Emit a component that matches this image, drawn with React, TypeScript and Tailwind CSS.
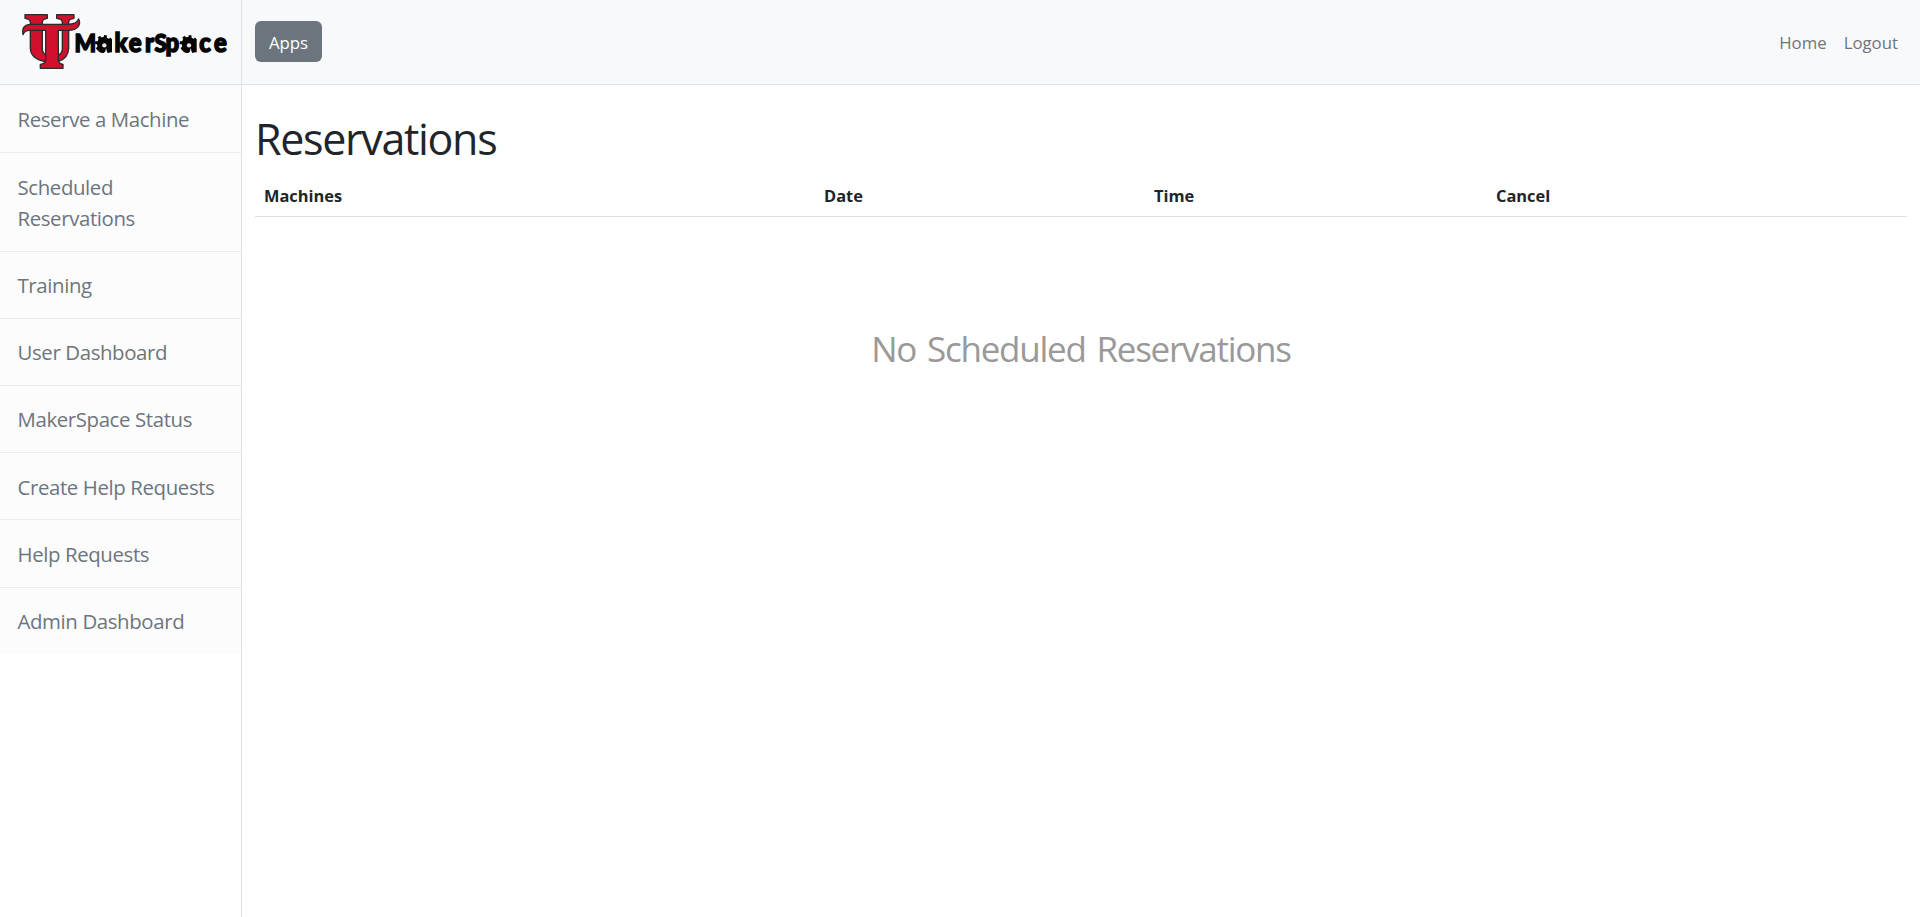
const navItems = [
  "Reserve a Machine",
  "Scheduled Reservations",
  "Training",
  "User Dashboard",
  "MakerSpace Status",
  "Create Help Requests",
  "Help Requests",
  "Admin Dashboard",
];

const teeth = [10, 55, 190, 235, 280, 325];

function Gear({ cx, cy }: { cx: number; cy: number }) {
  return (
    <g transform={`translate(${cx} ${cy})`}>
      {teeth.map((a) => (
        <rect key={a} x="-4.5" y="-27" width="9" height="12" fill="#050505" transform={`rotate(${a})`} />
      ))}
      <circle r="21" fill="#050505" />
      <circle cx="1" cy="4" r="6.5" fill="#e9eaec" />
      <path d="M6 12 L10 27 L3 27 Z" fill="#f8f9fb" />
      <rect x="12" y="-14" width="12" height="39" fill="#050505" />
    </g>
  );
}

function Logo() {
  return (
    <svg className="block h-[84px] w-[240px]" viewBox="0 0 720 252" role="img" aria-label="MakerSpace">
      <g fill="#cf112d" stroke="#2c2a2e" strokeWidth="4" strokeLinejoin="round">
        <path d="M75 44 H142 V55 C133 56 127 60 127 67 V148 Q128 160 139 166 H173 Q187 160 187 146 V67 C187 60 181 56 170 55 V44 H222 V55 C212 56 206 60 206 67 V145 Q205 176 174 185 H134 Q92 176 91 145 V67 C91 60 85 56 75 55 Z" />
        <path d="M69 104 C65 84 74 73 92 73 H203 C222 73 232 68 236 57 C245 75 231 91 207 91 H175 V181 Q176 191 189 193 V205 H121 V193 Q137 191 137 181 V91 H89 C78 91 72 95 69 104 Z" />
      </g>
      <text
        x="243 319 373 420 473 504 540 594 650 698"
        y="155"
        transform="scale(0.92 1)"
        fontFamily="Lato, 'Open Sans', sans-serif"
        fontWeight="900"
        fontSize="78"
        fill="#050505"
        stroke="#050505"
        strokeWidth="4.5"
      >
        <tspan fontSize="74">M</tspan>aker<tspan fontSize="72">S</tspan>pace
      </text>
      <Gear cx={312} cy={132} />
      <Gear cx={566} cy={132} />
    </svg>
  );
}

export default function App() {
  return (
    <div className="flex h-[917px] w-full flex-col overflow-hidden bg-white font-['Open_Sans',sans-serif] text-[#212529]">
      <header className="flex h-[85px] shrink-0 border-b border-[#dee2e6] bg-[#f8f9fb]">
        <div className="w-[242px] shrink-0 border-r border-[#dee2e6]">
          <Logo />
        </div>
        <div className="flex h-[83px] flex-1 items-center justify-between pr-[22px] pl-[13px]">
          <button className="h-[41px] w-[67px] rounded-md bg-[#6c757d] pt-px text-[16.8px] leading-[39px] text-white">
            Apps
          </button>
          <nav className="flex gap-[17px] pt-[2px] text-[16.8px] text-[#737373]">
            <a>Home</a>
            <a>Logout</a>
          </nav>
        </div>
      </header>
      <div className="flex min-h-0 flex-1">
        <aside className="w-[242px] shrink-0 border-r border-[#dee2e6]">
          <ul className="divide-y divide-[#e9ebee] bg-[#fcfcfc] pt-px">
            {navItems.map((item) => (
              <li
                key={item}
                className="pt-[18.4px] pr-4 pb-[16.6px] pl-[17.5px] text-[20.4px] leading-[31.2px] tracking-[-0.38px] text-[#6c757d]"
              >
                {item}
              </li>
            ))}
          </ul>
        </aside>
        <main className="flex-1 pt-[30px] pr-[13px] pl-[13px]">
          <h1 className="text-[43px] leading-[48px] tracking-[-1.32px]">Reservations</h1>
          <table className="mt-3 w-full table-fixed border-collapse">
            <thead>
              <tr className="h-[41px] border-b border-[#dee2e6] text-left text-[16.4px] leading-6">
                <th className="w-[561px] pt-[2px] pl-[9px] font-bold">Machines</th>
                <th className="w-[329px] pt-[2px] pl-[8px] font-bold">Date</th>
                <th className="w-[342px] pt-[2px] pl-[9px] font-bold">Time</th>
                <th className="pt-[2px] pl-[9px] font-bold">Cancel</th>
              </tr>
            </thead>
          </table>
          <p className="mt-[111px] text-center text-[35px] leading-[42px] tracking-[-1.25px] [word-spacing:3px] text-[#999999]">
            No Scheduled Reservations
          </p>
        </main>
      </div>
    </div>
  );
}
